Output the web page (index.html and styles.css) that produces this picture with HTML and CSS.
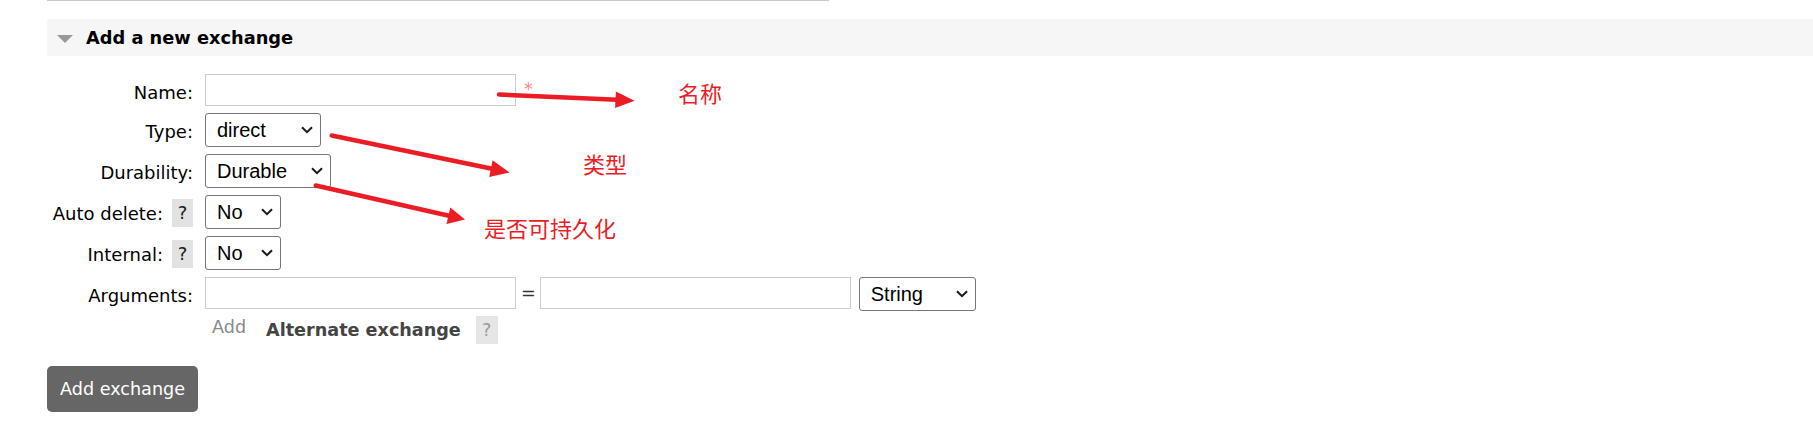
FILE: index.html
```html
<!DOCTYPE html>
<html>
<head>
  <meta charset="UTF-8">
  <title>Exchanges</title>
  <link rel="stylesheet" href="styles.css">
</head>
<body>
  <div class="page">
    <div class="prev-section"></div>

    <section class="section">
      <h2 class="section-head"><span class="toggle"></span>Add a new exchange</h2>

      <form class="form">
        <div class="row">
          <label class="label"><span class="label-text">Name:</span></label>
          <div class="field">
            <input type="text" class="text-input">
            <span class="mandatory">*</span>
          </div>
        </div>

        <div class="row">
          <label class="label"><span class="label-text">Type:</span></label>
          <div class="field">
            <span class="select-wrap">
              <select class="select select-type">
                <option>direct</option>
                <option>fanout</option>
                <option>headers</option>
                <option>topic</option>
              </select>
              <svg class="chevron" width="12" height="8" viewBox="0 0 12 8"><path d="M1 1.2l5 5 5-5" fill="none" stroke="#1a1a1a" stroke-width="2"/></svg>
            </span>
          </div>
        </div>

        <div class="row">
          <label class="label"><span class="label-text">Durability:</span></label>
          <div class="field">
            <span class="select-wrap">
              <select class="select select-durable">
                <option>Durable</option>
                <option>Transient</option>
              </select>
              <svg class="chevron" width="12" height="8" viewBox="0 0 12 8"><path d="M1 1.2l5 5 5-5" fill="none" stroke="#1a1a1a" stroke-width="2"/></svg>
            </span>
          </div>
        </div>

        <div class="row">
          <label class="label"><span class="label-text">Auto delete:</span><span class="help">?</span></label>
          <div class="field">
            <span class="select-wrap">
              <select class="select select-short">
                <option>No</option>
                <option>Yes</option>
              </select>
              <svg class="chevron" width="12" height="8" viewBox="0 0 12 8"><path d="M1 1.2l5 5 5-5" fill="none" stroke="#1a1a1a" stroke-width="2"/></svg>
            </span>
          </div>
        </div>

        <div class="row">
          <label class="label"><span class="label-text">Internal:</span><span class="help">?</span></label>
          <div class="field">
            <span class="select-wrap">
              <select class="select select-short">
                <option>No</option>
                <option>Yes</option>
              </select>
              <svg class="chevron" width="12" height="8" viewBox="0 0 12 8"><path d="M1 1.2l5 5 5-5" fill="none" stroke="#1a1a1a" stroke-width="2"/></svg>
            </span>
          </div>
        </div>

        <div class="row">
          <label class="label"><span class="label-text">Arguments:</span></label>
          <div class="field">
            <input type="text" class="text-input">
            <span class="equals">=</span>
            <input type="text" class="text-input">
            <span class="select-wrap select-gap">
              <select class="select select-string">
                <option>String</option>
                <option>Number</option>
                <option>Boolean</option>
                <option>List</option>
              </select>
              <svg class="chevron" width="12" height="8" viewBox="0 0 12 8"><path d="M1 1.2l5 5 5-5" fill="none" stroke="#1a1a1a" stroke-width="2"/></svg>
            </span>
          </div>
        </div>

        <div class="row row-alt">
          <span></span>
          <div class="field">
            <span class="add-link">Add</span>
            <span class="alt-title">Alternate exchange</span>
            <span class="help help-muted">?</span>
          </div>
        </div>
      </form>

      <button class="boton">Add exchange</button>
    </section>

    <!-- Anotaciones en rojo sobre la captura -->
    <div class="annotations">
      <svg width="1813" height="427" viewBox="0 0 1813 427">
        <g stroke="#ec1c24" stroke-width="4.5" stroke-linecap="round" fill="#ec1c24">
          <line x1="499" y1="94.5" x2="617" y2="99.8"/>
          <polygon points="634.5,100.7 615.9,91.5 615.1,108.1" stroke="none"/>
          <line x1="331.7" y1="135.5" x2="492" y2="168.8"/>
          <polygon points="509.5,172.5 492.6,160.3 489.2,176.9" stroke="none"/>
          <line x1="315.7" y1="185.5" x2="450" y2="216"/>
          <polygon points="465,219.5 450.3,207.4 446.5,224" stroke="none"/>
        </g>
      </svg>
      <span class="note note-name">名称</span>
      <span class="note note-type">类型</span>
      <span class="note note-durable">是否可持久化</span>
    </div>
  </div>
</body>
</html>
```

FILE: styles.css
```css
/* Estilos generales */
body {
  font-family: Verdana, "DejaVu Sans", sans-serif;
  font-size: 17.6px;
  color: #000;
  margin: 0;
  padding: 0;
  background: #fff;
}

.page {
  position: relative;
  padding-left: 47px;
  height: 427px;
  overflow: hidden;
}

.prev-section {
  width: 782px;
  height: 0;
  border-top: 1px solid #c8c8c8;
  margin-bottom: 18px;
}

/* Cabecera de la seccion */
.section-head {
  display: flex;
  align-items: center;
  height: 37px;
  margin: 0 0 18px 0;
  padding-left: 10px;
  background-color: #f6f6f6;
  font-size: 17.8px;
  font-weight: bold;
  line-height: 37px;
}

.toggle {
  width: 0;
  height: 0;
  border-left: 8px solid transparent;
  border-right: 8px solid transparent;
  border-top: 8px solid #999;
  margin: 3px 13px 0 0;
}

/* Formulario */
.form {
  display: flex;
  flex-direction: column;
  gap: 7px;
}

.row {
  display: grid;
  grid-template-columns: 146px 1fr;
  column-gap: 12px;
  align-items: start;
}

.row-alt {
  margin-top: -2px;
}

.label {
  display: flex;
  justify-content: flex-end;
  align-items: flex-start;
  gap: 9px;
  white-space: nowrap;
  font-size: 18px;
}

.label-text {
  padding-top: 8px;
  line-height: 22px;
}

.help {
  display: inline-block;
  width: 21px;
  height: 28px;
  margin-top: 4px;
  line-height: 28px;
  text-align: center;
  background-color: #e2e2e2;
  color: #1a1a1a;
}

.help-muted {
  width: 22px;
  margin: 0 0 0 15px;
  background-color: #e6e6e6;
  color: #9a9a9a;
  font-size: 17.6px;
}

.field {
  display: flex;
  align-items: flex-start;
}

.text-input {
  box-sizing: border-box;
  width: 311px;
  height: 32px;
  margin: 0;
  padding: 0 4px;
  border: 1px solid #ccc;
  border-radius: 0;
  font-family: "Liberation Sans", Arial, sans-serif;
  font-size: 20px;
}

.mandatory {
  margin: 4px 0 0 8px;
  line-height: 22px;
  color: #f88;
}

.equals {
  margin: 0 4px 0 5px;
  line-height: 32px;
  color: #333;
}

/* Selectores */
.select-wrap {
  position: relative;
  display: inline-block;
  height: 34px;
}

.select-gap {
  margin-left: 8px;
}

.select {
  -webkit-appearance: none;
  appearance: none;
  box-sizing: border-box;
  height: 34px;
  margin: 0;
  padding: 0 0 0 11px;
  border: 1px solid #767676;
  border-radius: 3px;
  background: #fff;
  color: #000;
  font-family: "Liberation Sans", Arial, sans-serif;
  font-size: 20px;
}

.select-type {
  width: 116px;
}

.select-durable {
  width: 126px;
}

.select-short {
  width: 76px;
}

.select-string {
  width: 117px;
}

.chevron {
  position: absolute;
  right: 8px;
  top: 13px;
  pointer-events: none;
}

.add-link {
  margin-left: 7px;
  line-height: 22px;
  color: #888;
}

.alt-title {
  margin-left: 20px;
  line-height: 28px;
  font-weight: bold;
  color: #444;
}

/* Boton */
.boton {
  display: block;
  height: 46px;
  margin-top: 22px;
  padding: 0 13px;
  border: none;
  border-radius: 5px;
  background-color: #666;
  color: #fff;
  font-family: Verdana, "DejaVu Sans", sans-serif;
  font-size: 17.6px;
  cursor: pointer;
}

/* Anotaciones */
.annotations {
  position: absolute;
  left: 0;
  top: 0;
  width: 1813px;
  height: 427px;
  pointer-events: none;
}

.annotations svg {
  position: absolute;
  left: 0;
  top: 0;
}

.note {
  position: absolute;
  font-family: "Noto Sans CJK SC", sans-serif;
  font-size: 22px;
  line-height: 22px;
  color: #ec1c24;
  white-space: nowrap;
}

.note-name {
  left: 678px;
  top: 81px;
}

.note-type {
  left: 583px;
  top: 152px;
}

.note-durable {
  left: 484px;
  top: 216px;
}
```
